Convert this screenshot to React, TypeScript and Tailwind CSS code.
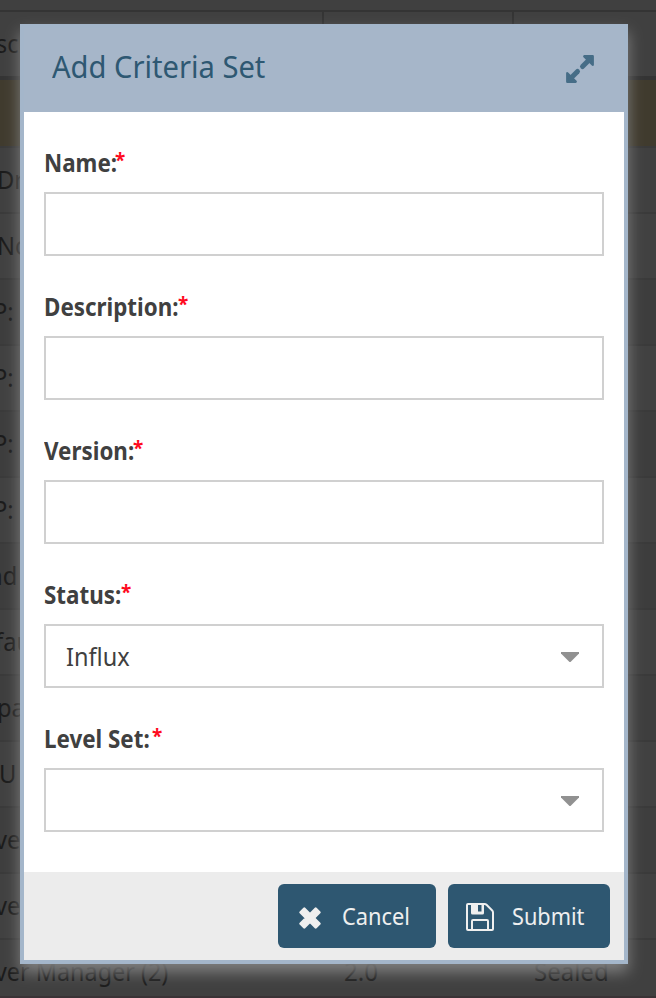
import type { ReactNode } from "react";

const rows = [
  { text: "", shift: "ml-0", bg: "bg-[#403b2e]" },
  { text: "Dr", shift: "-ml-[3px]", bg: "bg-[#404040]" },
  { text: "No", shift: "-ml-[3px]", bg: "bg-[#414141]" },
  { text: "P:", shift: "-ml-[7px]", bg: "bg-[#3d3d3d]" },
  { text: "P:", shift: "-ml-[7px]", bg: "bg-[#414141]" },
  { text: "P:", shift: "-ml-[7px]", bg: "bg-[#3d3d3d]" },
  { text: "P:", shift: "-ml-[7px]", bg: "bg-[#414141]" },
  { text: "nd", shift: "-ml-[12px]", bg: "bg-[#3d3d3d]" },
  { text: "fau", shift: "-ml-[5px]", bg: "bg-[#414141]" },
  { text: "pa", shift: "-ml-[3px]", bg: "bg-[#3e3e3e]" },
  { text: "U", shift: "-ml-[1px]", bg: "bg-[#414141]" },
  { text: "ve", shift: "-ml-[5px]", bg: "bg-[#3e3e3e]" },
  { text: "ve", shift: "-ml-[5px]", bg: "bg-[#414141]" },
];

function BackgroundGrid() {
  return (
    <div className="col-start-1 row-start-1 h-[998px] w-[656px] overflow-hidden bg-[#404040] text-[25px] text-[#1b1b1b]">
      <div className="h-3 border-b-2 border-[#343434]" />
      <div className="flex h-[68px] border-b-4 border-[#343434]">
        <div className="flex w-[324px] items-center border-r-2 border-[#343434]">
          <span className="-ml-[4px] origin-left scale-x-[0.93]">scr</span>
        </div>
        <div className="w-[190px] border-r-2 border-[#343434]" />
      </div>
      {rows.map((row, i) => (
        <div
          key={i}
          className={`flex items-center border-b-2 border-[#3a3a3a] ${i === 0 ? "h-[68px]" : "h-[66px]"} ${row.bg}`}
        >
          <span className={`origin-left scale-x-[0.95] pb-px ${row.shift}`}>{row.text}</span>
        </div>
      ))}
      <div className="flex h-[58px] border-b-2 border-[#3a3336] pt-[14px] leading-[34px]">
        <div className="w-[344px] whitespace-nowrap">
          <span className="-ml-[5px] inline-block origin-left scale-x-[0.935]">ver Manager (2)</span>
        </div>
        <div className="w-[190px]">
          <span className="inline-block origin-left scale-x-[0.97]">2.0</span>
        </div>
        <div className="origin-left scale-x-[0.96]">Sealed</div>
      </div>
    </div>
  );
}

function Field({ label, width, children }: { label: string; width: string; children?: ReactNode }) {
  return (
    <div className="h-36">
      <label className="flex h-[44px] text-[25px] leading-[28px] font-bold text-[#404040]">
        <span className={width}>
          <span className="inline-block origin-left scale-x-[0.895] whitespace-nowrap">{label}</span>
        </span>
        <span className="text-[19px] leading-[25px] text-[#ff0a1e]">*</span>
      </label>
      <div className="flex h-16 items-center justify-between border-2 border-[#d0d0d0] bg-white pt-[2px] pr-[22px] pl-5 text-[25px] text-[#404040]">
        {children}
      </div>
    </div>
  );
}

function Caret() {
  return (
    <svg width="20" height="10" viewBox="0 0 20 10" fill="#919191">
      <path d="M1 0h18v1.5L11 9.5q-1 1-2 0L1 1.5z" />
    </svg>
  );
}

function ExpandIcon() {
  return (
    <svg width="28" height="28" viewBox="0 0 28 28" fill="#466d87" stroke="#466d87" strokeLinejoin="round">
      <path d="M18.3 1.3h8.4v8.4z" strokeWidth="2.4" />
      <path d="M23.5 4.500l-7 7" strokeWidth="5" strokeLinecap="round" />
      <path d="M9.7 26.7H1.3v-8.4z" strokeWidth="2.4" />
      <path d="M4.5 23.500l7-7" strokeWidth="5" strokeLinecap="round" />
    </svg>
  );
}

function CloseIcon() {
  return (
    <svg width="22" height="22" viewBox="0 0 22 22" fill="#efefef" stroke="#efefef" strokeWidth="2.6" strokeLinejoin="round">
      <path d="M5.3 1.6 11 7.300l5.700-5.700 3.700 3.700L14.700 11l5.700 5.700-3.700 3.700L11 14.700l-5.700 5.700-3.700-3.700L7.300 11 1.600 5.300z" />
    </svg>
  );
}

function SaveIcon() {
  return (
    <svg width="28" height="28" viewBox="0 0 28 28" fill="none" stroke="#efefef" strokeWidth="2">
      <path d="M2 1h16.5q1.200 0 2 .8l5.700 5.700q.8.8.8 2V26q0 1-1 1H2q-1 0-1-1V2q0-1 1-1z" />
      <path d="M6 27v-9q0-1 1-1h14q1 0 1 1v9" />
      <path
        d="M5 0h13v10q0 1.500-1.500 1.500h-10Q5 11.500 5 10zM12 2v6.500h3.500V2z"
        fill="#efefef"
        fillRule="evenodd"
        stroke="none"
      />
    </svg>
  );
}

export default function App() {
  return (
    <main className="grid h-[998px] w-[656px] overflow-hidden font-['Noto_Sans',sans-serif]">
      <BackgroundGrid />
      <section className="z-10 col-start-1 row-start-1 mt-6 ml-5 h-[940px] w-[608px] border-4 border-[#a4b6ca] bg-white shadow-[0_8px_14px_#808080]">
        <header className="flex h-[84px] items-center justify-between bg-[#a6b6c9] pr-[30px] pb-[3px] pl-7">
          <h1 className="origin-left scale-x-[0.94] pb-[5px] text-[31px] whitespace-nowrap text-[#2e5872]">
            Add Criteria Set
          </h1>
          <button aria-label="Expand">
            <ExpandIcon />
          </button>
        </header>
        <form className="h-[760px] px-5 pt-[36px]">
          <Field label="Name:" width="w-[71px]" />
          <Field label="Description:" width="w-[134px]" />
          <Field label="Version:" width="w-[89px]" />
          <Field label="Status:" width="w-[77px]">
            <span className="origin-left scale-x-[0.94]">Influx</span>
            <Caret />
          </Field>
          <Field label="Level Set:" width="w-[108px]">
            <span />
            <Caret />
          </Field>
        </form>
        <footer className="flex h-[88px] items-center justify-end gap-3 bg-[#ececec] pr-[14px] text-2xl text-[#efefef]">
          <button className="flex h-16 w-[158px] items-center gap-[21px] rounded-md bg-[#2e5771] pl-[21px]">
            <span className="pt-[3px]">
              <CloseIcon />
            </span>
            <span className="origin-left scale-x-[0.91] pb-px">Cancel</span>
          </button>
          <button className="flex h-16 w-[162px] items-center gap-[18px] rounded-md bg-[#2e5771] pl-[18px]">
            <span className="pt-px">
              <SaveIcon />
            </span>
            <span className="origin-left scale-x-[0.905] pb-px">Submit</span>
          </button>
        </footer>
      </section>
    </main>
  );
}
